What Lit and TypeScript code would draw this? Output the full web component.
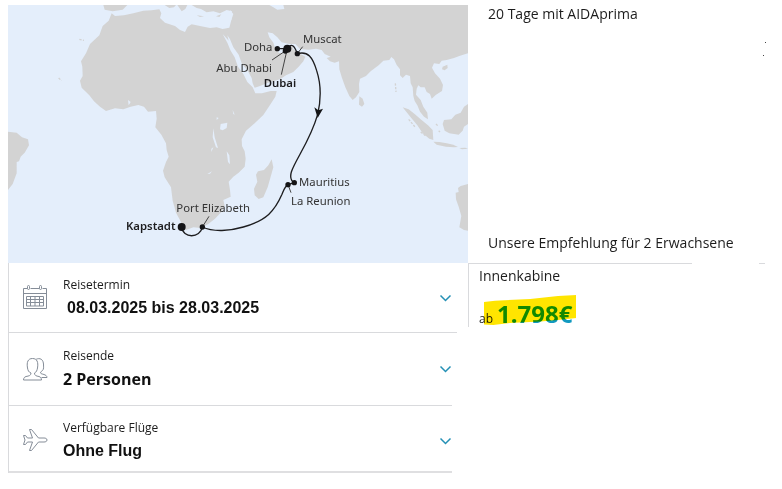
import { LitElement, html, svg, css } from "lit";
import { customElement } from "lit/decorators.js";

// Map units: three per CSS pixel at the default width.
const LAND = [
  // Africa, Arabia and Asia
  "M335 40L345 48L372 46L400 40L430 32L455 31L478 28L484 40L480 54L495 68L525 78L540 90L555 96L563 80L575 73L600 78L630 84L650 82L668 87L688 83L694 60L696 34L680 30L660 40L640 34L620 37L603 27L590 24L575 15H1404V160L1380 167L1362 174L1340 180L1325 182L1318 192L1302 190L1296 203L1305 220L1320 236L1329 255L1326 273L1308 284L1295 296L1290 282L1280 276L1274 262L1262 262L1255 256L1250 266L1248 284L1262 300L1270 320L1282 338L1284 358L1272 350L1260 335L1252 316L1244 303L1240 288L1238 262L1232 250L1230 228L1218 224L1208 234L1200 226L1200 208L1190 195L1182 178L1174 171L1168 180L1150 182L1136 196L1112 214L1098 228L1080 236L1077 252L1078 276L1068 292L1058 300L1048 288L1036 262L1026 234L1018 208L1017 184L1004 188L990 184L980 174L992 170L974 162L965 150L948 146L926 149L900 147L886 132L868 132L845 127L832 112L818 100L803 97L808 112L820 128L826 146L832 148L836 158L852 160L866 150L876 134L880 148L898 160L916 170L910 184L896 200L880 216L858 226L840 238L808 247L780 258L764 263L758 250L755 234L742 210L726 192L716 164L700 142L690 118L682 106L686 122L668 102L682 128L692 152L704 172L714 200L730 222L742 246L758 262L766 280L786 280L812 273L830 273L826 290L812 312L790 345L764 370L738 392L725 418L726 438L734 454L737 476L734 500L716 518L700 530L686 545L690 570L692 590L670 600L674 618L666 634L645 656L625 672L602 684L580 682L558 690L546 684L543 666L528 638L518 602L513 562L494 532L489 512L498 486L506 470L500 450L498 430L484 404L466 382L470 356L468 333L444 335L432 320L415 315L392 320L370 328L345 325L318 333L300 320L282 304L268 286L245 263L240 242L248 228L247 200L243 184L258 160L270 132L298 106L308 78L326 62Z",
  // Iberia, Italy, Greece
  "M310 15L314 29L338 34L368 29L382 15Z",
  "M494 15L508 24L522 22L528 15Z",
  "M532 15L545 34L556 27L562 15Z",
  "M590 46L612 49L600 51Z M648 49L664 43L658 51Z",
  // South America
  "M24 395L50 398L66 412L84 418L87 436L74 458L62 470L57 484L50 486L50 520L38 552L24 570Z",
  // Madagascar
  "M815 478L820 502L812 530L803 562L790 592L776 597L764 586L762 566L772 545L768 524L774 514L792 510L805 496Z",
  // Sri Lanka, Sumatra, Java, Borneo, Hainan, Australia
  "M1078 289L1088 296L1093 312L1086 320L1077 314Z",
  "M1208 322L1226 328L1244 342L1262 358L1284 376L1298 390L1300 420L1288 416L1268 400L1252 376L1232 352Z",
  "M1300 425L1318 426L1340 430L1360 434L1374 441L1362 442L1338 440L1310 434Z M1378 444L1396 443L1404 446L1386 448Z",
  "M1404 312L1392 320L1382 338L1366 344L1354 358L1332 360L1328 372L1334 392L1348 400L1376 404L1388 392L1392 380L1404 372Z",
  "M1328 200L1342 194L1343 204L1334 211L1326 208Z",
  "M1404 552L1382 558L1374 564L1376 576L1367 578L1368 598L1376 620L1384 648L1378 682L1392 690L1404 692Z",
].join("");

const WATER =
  "M808 15H850L853 27L832 29L820 22Z M662 372L682 368L680 384L668 391L660 388Z M640 385L644 412L654 444L648 442L638 412Z M680 454L688 466L690 493L684 486Z M384 300L392 306L386 316Z M634 446L640 442L634 456Z M622 522L636 514L630 521Z M698 330L704 344L700 342Z M650 352L656 354L650 360Z M690 30L700 42L694 60L690 62Z";

const map = svg`
  <rect x="24" y="15" width="1380" height="774" class="sea" />
  <path class="land" d=${LAND} />
  <path class="sea" d=${WATER} />
  <path class="islets" d="M1226 358L1246 382M1262 396L1278 408M1186 250L1188 276M238 118L252 121M176 234L184 242M1308 372L1314 378M1316 392L1320 396" />
  <g class="route">
    <path d="M545 681C548 716 601 716 607 681C640 697 690 693 730 681C800 661 824 633 846 583C852 568 854 560 864 554L883 548C874 543 869 534 874 516C886 478 930 424 953 343C963 300 963 252 950 212C938 172 924 152 892 161C884 140 876 126 862 146L832 146" />
    <path class="leader" d="M607 681L627 649M864 554L873 578M892 161L908 140M860 150L816 180M861 150L844 224" />
  </g>
  <g class="port">
    <circle cx="545" cy="681" r="12" />
    <circle cx="607" cy="681" r="8" />
    <circle cx="864" cy="554" r="8" />
    <circle cx="883" cy="548" r="8" />
    <circle cx="892" cy="161" r="8" />
    <circle cx="832" cy="146" r="8" />
    <circle cx="856" cy="153" r="8" />
    <circle cx="862" cy="146" r="12" />
    <path d="M953 354L943 322L955 331L969 326Z" />
  </g>
  <g class="names">
    <text x="909" y="129">Muscat</text>
    <text x="732" y="154">Doha</text>
    <text x="649" y="217">Abu Dhabi</text>
    <text x="791" y="261" class="strong">Dubai</text>
    <text x="897" y="559">Mauritius</text>
    <text x="873" y="615">La Reunion</text>
    <text x="529" y="637">Port Elizabeth</text>
    <text x="378" y="689" class="strong">Kapstadt</text>
  </g>`;

const calendar = svg`
  <path d="M5.5 4.5H1.5V24.5H24.5V4.5H20.5M17.5 4.5H8.5M1.5 9.5H24.5" />
  <rect x="5.500" y="1.500" width="2" height="4" rx="1" />
  <rect x="17.500" y="1.500" width="2" height="4" rx="1" />
  <path d="M4.500 12.500H21.500V22H4.500ZM4.500 15.500H21.500M4.500 18.500H21.500M8.500 12.500V22M13 12.500V22M17.500 12.500V22" />`;

const people = svg`
  <path d="M9 17C6.500 16 6 14.500 5.500 12C4.500 6 6 2.500 10.500 2.500S16.500 6 15.500 12C15 14.500 14.500 16 12.500 17C12.500 19.500 14 20 17 20.500C18.500 21 19.500 22 19.500 24H1.500C1.500 22 2.500 21 4 20.500C7 20 9 19.500 9 17Z" />
  <path d="M14 3.500C15 2.500 21 1 21.500 8C21.500 11 22 13 20.500 14.500C19.500 15.500 18.500 15.500 18.500 17C19 18.500 25 18 25 21.500H19.500" />`;

const plane = svg`
  <path d="M25 13C25 11.500 23.500 11 22 11H16.500L9.500 2.500H7.500L10.500 11H5.500L3.500 8.500H1.500L3 13L1.500 17.500H3.500L5.500 15H10.500L7.500 23.500H9.500L16.500 15H22C23.500 15 25 14.500 25 13Z" />`;

const rows = [
  { kind: "dates", icon: calendar, label: "Reisetermin", value: "08.03.2025 bis 28.03.2025" },
  { kind: "guests", icon: people, label: "Reisende", value: "2 Personen" },
  { kind: "flights", icon: plane, label: "Verfügbare Flüge", value: "Ohne Flug" },
];

@customElement("app-root")
export class AppRoot extends LitElement {
  static styles = css`
    :host {
      display: block;
      background: #fff;
      color: #1c1c1c;
      font: 14px/20px "Open Sans", "Noto Sans", sans-serif;
    }
    .page {
      display: grid;
      grid-template-columns: 460fr 314fr;
      padding: 5px 0 16px 8px;
    }
    .map {
      display: block;
      width: 100%;
    }
    .sea { fill: #e4eefb; }
    .land { fill: #d3d3d3; }
    .islets { fill: none; stroke: #d3d3d3; stroke-width: 4; stroke-dasharray: 7 4; }
    .route { fill: none; stroke: #1d1d1f; stroke-width: 4; }
    .leader { stroke-width: 3; stroke: #444; }
    .port { fill: #141416; }
    .names { font: 34px "Noto Sans", sans-serif; fill: #333; }
    .strong { font-weight: 600; fill: #1d1d1f; }
    .info {
      display: flex;
      flex-direction: column;
      justify-content: space-between;
      padding: 0 16px 11px 20px;
      line-height: 18px;
    }
    .info p, .offer p { margin: 0; }
    .specks {
      align-self: flex-end;
      width: 3px;
      height: 14px;
      margin-bottom: auto;
      margin-top: 19px;
      background:
        linear-gradient(#444, #444) right top / 1px 1px no-repeat,
        linear-gradient(#444, #444) left bottom / 1px 1px no-repeat;
    }
    .choices {
      border-left: 1px solid #d9dadd;
      margin-right: 16px;
    }
    .row {
      display: flex;
      align-items: center;
      gap: 14px;
      box-sizing: border-box;
      width: 100%;
      min-height: 73px;
      margin: 0;
      padding: 0 0 0 13px;
      border: 0;
      border-bottom: 1px solid #d9dadd;
      background: none;
      color: inherit;
      font: inherit;
      text-align: left;
      cursor: pointer;
    }
    .dates {
      width: calc(100% + 5px);
      min-height: 70px;
      padding-right: 5px;
    }
    .flights {
      min-height: 67px;
      padding-top: 4px;
      border-bottom: 2px solid #dfdfe1;
    }
    .icon {
      flex: none;
      width: 27px;
      height: 27px;
      fill: none;
      stroke: #858d98;
    }
    .copy { flex: 1; padding-bottom: 2px; }
    .label { display: block; font-size: 12px; line-height: 22px; }
    .value {
      display: block;
      font-size: 16px;
      line-height: 24px;
      font-weight: 700;
      color: #111;
    }
    .dates .value, .flights .value { font-family: "Liberation Sans", Arial, sans-serif; }
    .dates .value { padding-left: 4px; }
    .chevron {
      flex: none;
      width: 13px;
      height: 8px;
      fill: none;
      stroke: #2490b5;
      stroke-width: 1.5;
    }
    .rule {
      display: flex;
      justify-content: space-between;
      padding-right: 17px;
    }
    .rule span { height: 1px; background: #d9dadd; width: 6px; }
    .rule .long { width: 224px; }
    .offer {
      border-left: 1px solid #d9dadd;
      padding: 2px 0 0 10px;
    }
    .offer .price {
      position: relative;
      display: flex;
      align-items: baseline;
      gap: 4px;
      width: max-content;
      margin-top: 20px;
      line-height: 16px;
    }
    .from { font-size: 12px; }
    .amount { font-size: 24px; font-weight: 700; color: #1299c0; }
    .marker {
      position: absolute;
      left: 5px;
      right: -4px;
      bottom: 2px;
      height: 30px;
      background: #ffe500;
      mix-blend-mode: multiply;
      clip-path: polygon(0 23%, 12% 19%, 50% 13%, 80% 3%, 100% 0, 100% 77%, 80% 83%, 61% 88%, 28% 93%, 10% 100%, 0 98%);
    }
  `;

  render() {
    return html`
      <main class="page">
        <svg class="map" viewBox="24 15 1380 774" role="img" aria-label="Reiseroute von Kapstadt nach Dubai">${map}</svg>
        <section class="info">
          <p>20 Tage mit AIDAprima</p>
          <span class="specks" aria-hidden="true"></span>
          <p>Unsere Empfehlung für 2 Erwachsene</p>
        </section>
        <section class="choices">
          ${rows.map(
            (row) => html`
              <button type="button" class="row ${row.kind}">
                <svg class="icon" viewBox="0 0 27 27" aria-hidden="true">${row.icon}</svg>
                <span class="copy">
                  <span class="label">${row.label}</span>
                  <span class="value">${row.value}</span>
                </span>
                <svg class="chevron" viewBox="0 0 13 8" aria-hidden="true"><path d="M1.500 1.500L6.500 6.500L11.500 1.500" /></svg>
              </button>
            `,
          )}
        </section>
        <section>
          <div class="rule" aria-hidden="true"><span class="long"></span><span></span></div>
          <div class="offer">
            <p>Innenkabine</p>
            <p class="price">
              <span class="from">ab</span><span class="amount">1.798€</span>
              <span class="marker" aria-hidden="true"></span>
            </p>
          </div>
        </section>
      </main>
    `;
  }
}
